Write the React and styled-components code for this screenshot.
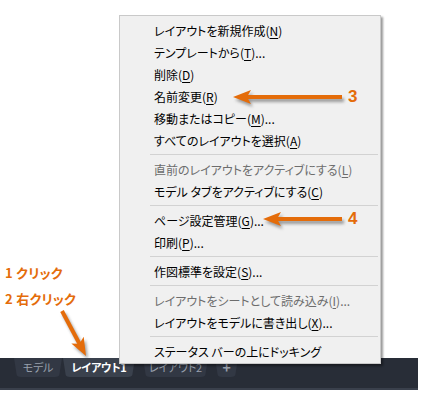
import React from 'react';
import styled, { createGlobalStyle } from 'styled-components';

const Global = createGlobalStyle`
  html, body { margin: 0; padding: 0; background: #fff; }
  body { font-family: "Noto Sans CJK JP", "Noto Sans", sans-serif; }
`;

const ORANGE = '#e46c0a';

const Stage = styled.div`
  position: relative;
  width: 431px;
  height: 405px;
  overflow: hidden;
  background: #fff;
  display: flex;
  flex-direction: column;
`;

const Canvas = styled.div`
  height: 358px;
  display: flex;
  flex-direction: column;
  justify-content: flex-end;
  gap: 6px;
  padding: 0 0 49px 5px;
  box-sizing: border-box;
`;

const Label = styled.div`
  font-family: "Noto Sans CJK JP", sans-serif;
  font-feature-settings: "palt";
  font-size: 13px;
  font-weight: 700;
  line-height: 20px;
  color: ${ORANGE};
  letter-spacing: 0.3px;
`;

const TabBar = styled.div`
  width: 418px;
  height: 32px;
  background: #282d37;
  border-bottom: 2px solid #3a404c;
  box-sizing: border-box;
  display: flex;
  align-items: flex-start;
  padding-left: 14px;
`;

const Tab = styled.div`
  height: 19px;
  width: ${p => p.$w}px;
  margin-left: ${p => p.$gap || 0}px;
  flex: none;
  box-sizing: border-box;
  display: flex;
  align-items: center;
  justify-content: center;
  padding-bottom: 1px;
  background: ${p => (p.$active ? '#3a414d' : '#323844')};
  border-radius: 0 0 7px 7px;
  clip-path: polygon(0 0, 100% 0, calc(100% - 3px) 100%, 3px 100%);
  font-family: "Noto Sans CJK JP", sans-serif;
  font-feature-settings: "palt";
  font-size: ${p => (p.$plus ? 14 : 11)}px;
  letter-spacing: -0.2px;
  font-weight: ${p => (p.$active || p.$plus ? 700 : 400)};
  color: ${p => (p.$active ? '#ffffff' : p.$plus ? '#9aa1ac' : '#98a0ad')};
`;

const Menu = styled.div`
  position: absolute;
  left: 119px;
  top: 15px;
  width: 262px;
  box-sizing: border-box;
  background: #f0f0f0;
  border: 1px solid #c9c9c9;
  box-shadow: 2px 2px 2px rgba(0, 0, 0, 0.4);
  padding: 3px 0 1px 0;
  display: flex;
  flex-direction: column;
`;

const Item = styled.div`
  height: 22px;
  display: flex;
  align-items: center;
  padding-left: 34px;
  font-family: "Noto Sans CJK JP", sans-serif;
  font-feature-settings: "palt";
  font-size: 12px;
  white-space: nowrap;
  color: ${p => (p.$disabled ? '#6d6d6d' : '#000')};
`;

const Key = styled.span`
  text-decoration: underline;
  text-underline-offset: 2px;
`;

const Sep = styled.div`
  height: 7px;
  display: flex;
  align-items: center;
  padding: 0 2px 0 30px;
  &::after {
    content: '';
    flex: 1;
    height: 1px;
    background: #d2d2d2;
  }
`;

const Overlay = styled.svg`
  position: absolute;
  inset: 0;
  pointer-events: none;
`;

const Num = styled.div`
  position: absolute;
  left: ${p => p.$x}px;
  top: ${p => p.$y}px;
  font-family: "Liberation Sans", Arial, sans-serif;
  font-weight: 700;
  font-size: 17px;
  line-height: 20px;
  color: ${ORANGE};
`;

const items = [
  ['レイアウトを新規作成(', 'N', ')'],
  ['テンプレートから(', 'T', ')...'],
  ['削除(', 'D', ')'],
  ['名前変更(', 'R', ')'],
  ['移動またはコピー(', 'M', ')...'],
  ['すべてのレイアウトを選択(', 'A', ')'],
  null,
  ['直前のレイアウトをアクティブにする(', 'L', ')', true],
  ['モデル タブをアクティブにする(', 'C', ')'],
  null,
  ['ページ設定管理(', 'G', ')...'],
  ['印刷(', 'P', ')...'],
  null,
  ['作図標準を設定(', 'S', ')...'],
  null,
  ['レイアウトをシートとして読み込み(', 'I', ')...', true],
  ['レイアウトをモデルに書き出し(', 'X', ')...'],
  null,
  ['ステータス バーの上にドッキング', '', ''],
];

function Arrow({ x1, y1, x2, y2 }) {
  const dx = x2 - x1;
  const dy = y2 - y1;
  const len = Math.hypot(dx, dy);
  const ux = dx / len;
  const uy = dy / len;
  const px = -uy;
  const py = ux;
  const hl = 18;
  const hw = 7;
  const bx = x2 - ux * hl;
  const by = y2 - uy * hl;
  const head = `${x2},${y2} ${bx + px * hw},${by + py * hw} ${bx + ux * 4},${by + uy * 4} ${bx - px * hw},${by - py * hw}`;
  return (
    <g>
      <g filter="url(#sh)" transform="translate(2,3)" opacity="0.55">
        <line x1={x1} y1={y1} x2={bx + ux * 5} y2={by + uy * 5} stroke="#555" strokeWidth="4" />
        <polygon points={head} fill="#555" />
      </g>
      <line x1={x1} y1={y1} x2={bx + ux * 5} y2={by + uy * 5} stroke={ORANGE} strokeWidth="4" />
      <polygon points={head} fill={ORANGE} />
    </g>
  );
}

export default function App() {
  return (
    <>
      <Global />
      <Stage>
        <Canvas>
          <Label>1 クリック</Label>
          <Label>2 右クリック</Label>
        </Canvas>
        <TabBar>
          <Tab $w={48}>モデル</Tab>
          <Tab $active $w={72} $gap={1}>レイアウト1</Tab>
          <Tab $w={65} $gap={8}>レイアウト2</Tab>
          <Tab $plus $w={23} $gap={7}>+</Tab>
        </TabBar>
        <Menu>
          {items.map((it, i) =>
            it === null ? (
              <Sep key={i} />
            ) : (
              <Item key={i} $disabled={it[3]}>
                {it[0]}
                {it[1] && <Key>{it[1]}</Key>}
                {it[2]}
              </Item>
            )
          )}
        </Menu>
        <Overlay width="431" height="405" viewBox="0 0 431 405">
          <defs>
            <filter id="sh" x="-20%" y="-50%" width="140%" height="200%">
              <feGaussianBlur stdDeviation="1.5" />
            </filter>
          </defs>
          <Arrow x1={342} y1={97} x2={233} y2={97} />
          <Arrow x1={342} y1={219} x2={263} y2={219} />
          <Arrow x1={62} y1={311} x2={86} y2={356} />
        </Overlay>
        <Num $x={348} $y={87}>3</Num>
        <Num $x={348} $y={209}>4</Num>
      </Stage>
    </>
  );
}
